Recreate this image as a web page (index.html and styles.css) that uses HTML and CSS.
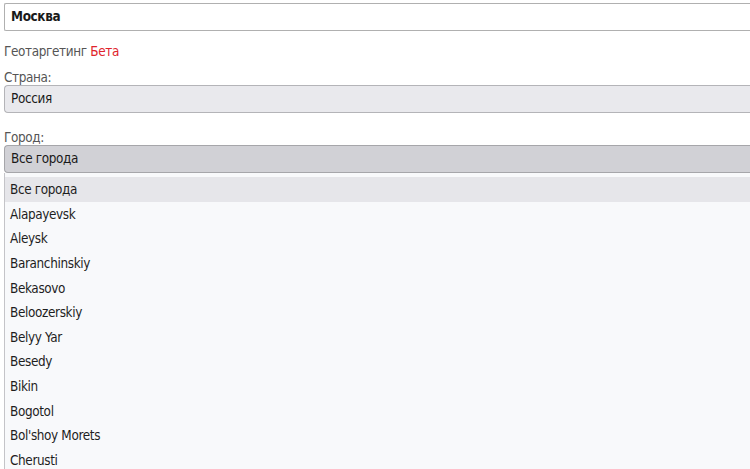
FILE: index.html
```html
<!DOCTYPE html>
<html lang="ru">
<head>
<meta charset="utf-8">
<link rel="stylesheet" href="styles.css">
</head>
<body>
<div class="page">
  <div class="field field-input"><span class="bold">Москва</span></div>
  <div class="geo">Геотаргетинг <span class="beta">Бета</span></div>
  <div class="label">Страна:</div>
  <div class="field field-select">Россия</div>
  <div class="label label-city">Город:</div>
  <div class="field field-select open">Все города</div>
  <ul class="list">
    <li class="active">Все города</li>
    <li>Alapayevsk</li>
    <li>Aleysk</li>
    <li>Baranchinskiy</li>
    <li>Bekasovo</li>
    <li>Beloozerskiy</li>
    <li>Belyy Yar</li>
    <li>Besedy</li>
    <li>Bikin</li>
    <li>Bogotol</li>
    <li>Bol'shoy Morets</li>
    <li>Cherusti</li>
  </ul>
</div>
</body>
</html>
```
FILE: styles.css
```css
html, body {
  margin: 0;
  padding: 0;
  background: #ffffff;
  overflow: hidden;
}
body {
  font-family: "DejaVu Sans Condensed", "DejaVu Sans", sans-serif;
  font-size: 13.4px;
  letter-spacing: -0.35px;
  color: #222;
}
.page {
  width: 760px;
  padding: 3px 0 0 4px;
}
.field {
  box-sizing: border-box;
  height: 28px;
  line-height: 26px;
  padding-left: 6px;
  border: 1px solid #b0b0b0;
  border-right: none;
  color: #1a1a1a;
}
.field-input {
  background: #fff;
  border-radius: 2px 0 0 2px;
}
.bold {
  font-weight: bold;
}
.geo {
  margin-top: 13px;
  height: 16px;
  line-height: 16px;
  color: #555;
}
.beta {
  color: #e0242c;
}
.label {
  margin-top: 11px;
  height: 14px;
  line-height: 14px;
  color: #555;
}
.label-city {
  margin-top: 18px;
}
.field-select {
  height: 28px;
  margin-top: 0;
  background: #e9e9ed;
  border-color: #b4b4b8;
  border-radius: 4px 0 0 4px;
}
.field-select.open {
  margin-top: 0;
  background: #d1d1d6;
  border-color: #a6a6aa;
}
.list {
  list-style: none;
  margin: 0;
  padding: 4px 0 0 0;
  background: #f8f9fb;
  border-left: 1px solid #c4c4c8;
}
.list li {
  height: 24.65px;
  line-height: 26px;
  padding-left: 5px;
  color: #1e1e1e;
}
.list li.active {
  background: #e6e6ea;
}
```
